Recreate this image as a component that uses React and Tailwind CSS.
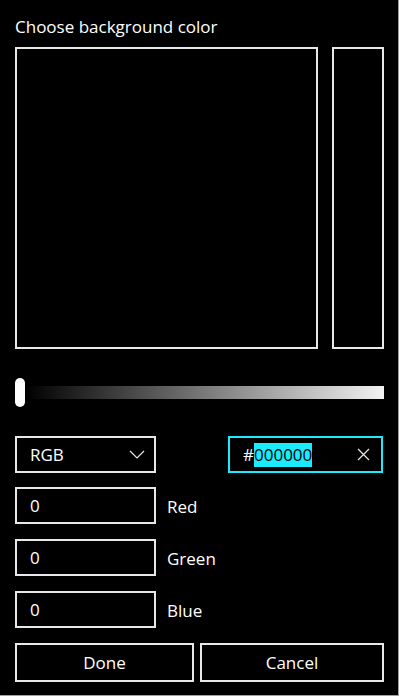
import React from 'react'

const font = { fontFamily: '"Open Sans", "Noto Sans", sans-serif' }

const NumberRow = ({ value, label }) => (
  <div className="flex items-center">
    <div className="w-[141px] h-[37px] border-2 border-[#e8e8e8] flex items-center pl-[13px] text-[17px] text-white">
      {value}
    </div>
    <span className="ml-[11px] mt-[3px] text-[17px] text-white">{label}</span>
  </div>
)

export default function App() {
  return (
    <div className="w-[400px] h-[698px] bg-white" style={font}>
      <div className="w-[399px] h-[696px] bg-black border-r border-b border-[#a0a0a0] pl-[15px] pt-[15px] flex flex-col">
        {/* Title */}
        <div className="text-[17px] leading-[24px] text-white">Choose background color</div>

        {/* Spectrum + preview */}
        <div className="flex gap-[14px] mt-[8px]">
          <div className="w-[303px] h-[302px] border-2 border-[#e8e8e8]" />
          <div className="w-[52px] h-[302px] border-2 border-[#e8e8e8]" />
        </div>

        {/* Value slider */}
        <div className="flex items-center mt-[29px] w-[369px] h-[29px]">
          <div className="w-[10px] h-[29px] rounded-full bg-white" />
          <div className="flex-1 h-[13px] bg-[linear-gradient(to_right,#000000,#f2f2f2)]" />
        </div>

        {/* Mode + hex */}
        <div className="flex justify-between w-[368px] mt-[29px]">
          <div className="w-[141px] h-[37px] border-2 border-[#e8e8e8] flex items-center justify-between pl-[13px] pr-[9px] text-[17px] text-white">
            <span>RGB</span>
            <svg width="16" height="9" viewBox="0 0 16 9" fill="none" stroke="#e8e8e8" strokeWidth="1.2">
              <path d="M1 1l7 7 7-7" />
            </svg>
          </div>
          <div className="w-[155px] h-[37px] border-2 border-[#1aebff] flex items-center pl-[13px] pr-[11px] text-[17px] text-white">
            <span>#</span>
            <span className="bg-[#1aebff] text-black leading-[24px]">000000</span>
            <svg className="ml-auto" width="13" height="13" viewBox="0 0 13 13" fill="none" stroke="#e8e8e8" strokeWidth="1.2">
              <path d="M1 1l11 11M12 1L1 12" />
            </svg>
          </div>
        </div>

        {/* RGB fields */}
        <div className="flex flex-col gap-[15px] mt-[14px]">
          <NumberRow value="0" label="Red" />
          <NumberRow value="0" label="Green" />
          <NumberRow value="0" label="Blue" />
        </div>

        {/* Buttons */}
        <div className="flex gap-[6px] mt-[15px]">
          <button className="w-[179px] h-[39px] border-2 border-[#e8e8e8] text-[17px] text-white">Done</button>
          <button className="w-[184px] h-[39px] border-2 border-[#e8e8e8] text-[17px] text-white">Cancel</button>
        </div>
      </div>
    </div>
  )
}
